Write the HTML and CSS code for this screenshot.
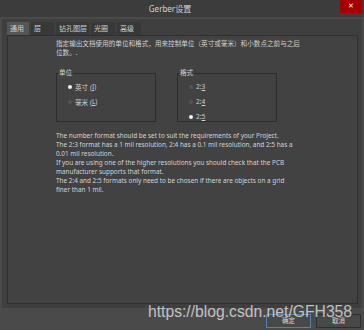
FILE: index.html
```html
<!DOCTYPE html>
<html>
<head>
<meta charset="utf-8">
<link rel="stylesheet" href="styles.css">
</head>
<body>
<div class="win">
  <div class="titlebar">
    <div class="title">Gerber设置</div>
    <div class="close">✕</div>
  </div>
  <div class="tabctrl">
    <div class="tabs">
      <div class="tab active">通用</div>
      <div class="tab">层</div>
      <div class="tab">钻孔图层</div>
      <div class="tab">光圈</div>
      <div class="tab">高级</div>
    </div>
    <div class="page">
      <p class="desc">指定输出文档使用的单位和格式，用来控制单位（英寸或毫米）和小数点之前与之后<br>位数。.</p>
      <div class="groups">
        <fieldset class="group">
          <legend>单位</legend>
          <div class="radio"><span class="dot on"></span>英寸 (<u>I</u>)</div>
          <div class="radio"><span class="dot"></span>毫米 (<u>L</u>)</div>
        </fieldset>
        <fieldset class="group">
          <legend>格式</legend>
          <div class="radio"><span class="dot"></span>2:<u>3</u></div>
          <div class="radio"><span class="dot"></span>2:<u>4</u></div>
          <div class="radio"><span class="dot on"></span>2:<u>5</u></div>
        </fieldset>
      </div>
      <div class="info">
        <div>The number format should be set to suit the requirements of your Project.</div>
        <div>The 2:3 format has a 1 mil resolution, 2:4 has a 0.1 mil resolution, and 2:5 has a</div>
        <div>0.01 mil resolution.</div>
        <div>If you are using one of the higher resolutions you should check that the PCB</div>
        <div>manufacturer supports that format.</div>
        <div>The 2:4 and 2:5 formats only need to be chosen if there are objects on a grid</div>
        <div>finer than 1 mil.</div>
      </div>
    </div>
  </div>
  <div class="buttons">
    <div class="btn ok">确定</div>
    <div class="btn">取消</div>
  </div>
  <div class="watermark">https://blog.csdn.net/GFH358</div>
</div>
</body>
</html>
```
FILE: styles.css
```css
html, body {
  margin: 0;
  padding: 0;
  background: #4a4a4a;
}
.win {
  position: relative;
  width: 364px;
  height: 330px;
  background: #4a4a4a;
  font-family: "Noto Sans", "Noto Sans CJK SC", sans-serif;
  color: #cfcfcf;
  overflow: hidden;
}
.titlebar {
  height: 17px;
  background: #3c3c3c;
  display: flex;
  align-items: flex-start;
}
.title {
  flex: 1;
  text-align: center;
  font-size: 8px;
  line-height: 17px;
  color: #d2d2d2;
}
.close {
  width: 22px;
  height: 13px;
  margin-right: 2px;
  background: #a50000;
  color: #fff;
  font-size: 7px;
  font-weight: bold;
  line-height: 13px;
  text-align: center;
  font-family: "DejaVu Sans", sans-serif;
}
.tabctrl {
  margin: 2px 2px 0 2px;
  background: #3f3f3f;
  padding: 3px 4px 4px 5px;
}
.tabs {
  display: flex;
  gap: 2px;
  height: 13px;
}
.tab {
  box-sizing: border-box;
  font-size: 7px;
  line-height: 13px;
  padding: 0 0 0 3px;
  background: #383838;
  color: #cfcfcf;
  white-space: nowrap;
  overflow: hidden;
}
.tab:nth-child(1) { width: 22px; }
.tab:nth-child(2) { width: 23px; }
.tab:nth-child(3) { width: 33px; }
.tab:nth-child(4) { width: 24px; }
.tab:nth-child(5) { width: 24px; }
.tab.active {
  background: #555555;
}
.page {
  height: 264px;
  border: 1px solid #2f2f2f;
  background: #424242;
  padding: 3px 0 0 48px;
}
.desc {
  margin: 0;
  font-size: 6.6px;
  line-height: 9px;
  color: #d0d0d0;
}
.groups {
  display: flex;
  gap: 21px;
  margin-top: 16px;
}
.group {
  margin: 0;
  border: 1px solid #2c2c2c;
  padding: 2px 0 0 11px;
  box-sizing: border-box;
  height: 53px;
  width: 100px;
  position: relative;
  top: -4px;
}
.group legend {
  font-size: 6.6px;
  line-height: 8px;
  padding: 0 1px;
  margin-left: -10px;
  color: #d0d0d0;
}
.radio {
  display: flex;
  align-items: center;
  font-size: 6.6px;
  height: 15px;
  color: #cfcfcf;
}
.dot {
  width: 4px;
  height: 4px;
  border-radius: 50%;
  background: #555;
  margin-right: 3px;
}
.dot.on { background: #f4f4f4; }
.info {
  margin-top: 5px;
  font-family: "Noto Sans", sans-serif;
  font-size: 6.4px;
  line-height: 9px;
  color: #d4d4d4;
}
.buttons {
  display: flex;
  justify-content: flex-end;
  gap: 5px;
  margin-top: 6px;
  padding-right: 3px;
}
.btn {
  width: 43px;
  height: 12px;
  border: 1px solid #2e2e2e;
  background: #484848;
  font-size: 6.5px;
  line-height: 12px;
  text-align: center;
  color: #d8d8d8;
}
.btn.ok {
  border-color: #5a7fa8;
}
.watermark {
  position: absolute;
  left: 148px;
  top: 302px;
  font-family: "Liberation Sans", Arial, sans-serif;
  font-size: 15.7px;
  line-height: 20px;
  color: rgba(235, 235, 235, 0.75);
  white-space: nowrap;
}
```
